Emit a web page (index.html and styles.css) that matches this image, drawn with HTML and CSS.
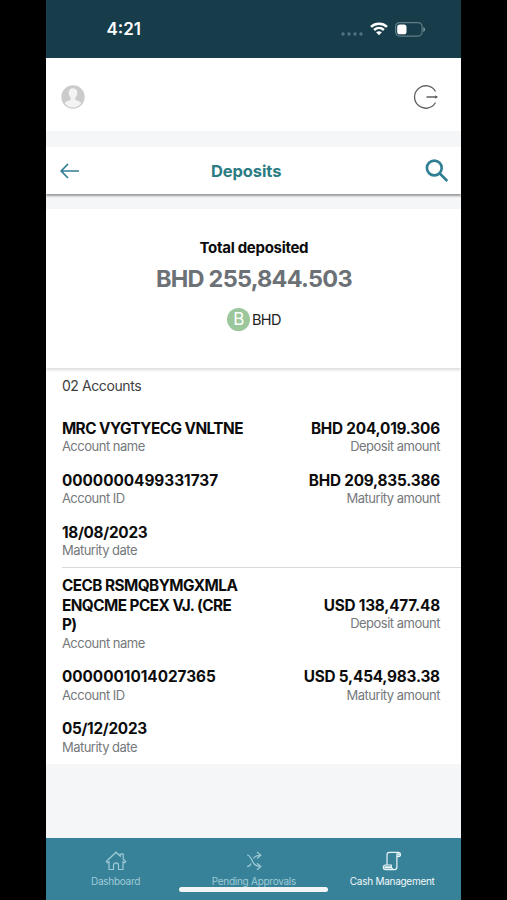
FILE: index.html
```html
<!DOCTYPE html>
<html lang="en">
<head>
    <meta charset="UTF-8">
    <title>Deposits</title>
    <link rel="stylesheet" href="styles.css">
</head>
<body>
<div class="phone">
    <div class="status">
        <span class="time">4:21</span>
        <div class="signals">
            <svg class="dots" width="22" height="4" viewBox="0 0 22 4"><circle cx="2" cy="2" r="1.7"/><circle cx="8" cy="2" r="1.7"/><circle cx="14" cy="2" r="1.7"/><circle cx="20" cy="2" r="1.7"/></svg>
            <svg class="wifi" width="18" height="14" viewBox="0 0 18 14"><path d="M1 4.8C5.5.6 12.5.6 17 4.8M4.1 8C7 5.4 11 5.4 13.9 8"/><path class="fill" d="M6.1 10.2C7.8 8.8 10.2 8.8 11.9 10.2L9 13.3Z"/></svg>
            <svg class="battery" width="31" height="15" viewBox="0 0 31 15"><rect class="shell" x=".6" y=".6" width="26.5" height="13.5" rx="4"/><rect x="2.2" y="2.5" width="9.3" height="9.8" rx="2.6"/><path class="tip" d="M28.3 5v5c1-.4 1.800-1.400 1.800-2.500S29.300 5.400 28.300 5Z"/></svg>
        </div>
    </div>

    <div class="header">
        <svg width="24" height="24" viewBox="0 0 24 24"><circle cx="12" cy="12" r="11.7" fill="#cbcbcb"/><path fill="#f3f3f3" d="M12 3.300c-2.700 0-4.300 1.900-4.300 4.500 0 2.100.8 4 2 5v2c-2.200.9-5 1.500-5.900 3.500C5.500 20.800 8.500 22.500 12 22.500s6.500-1.700 8.200-4.200c-.9-2-3.700-2.600-5.900-3.500v-2c1.200-1 2-2.900 2-5 0-2.600-1.600-4.500-4.300-4.500Z"/></svg>
        <svg width="26" height="24" viewBox="0 0 26 24"><path d="M22.500 6.500A11.200 11.200 0 1 0 22.500 17.500M13.500 12H23" fill="none" stroke="#606060" stroke-width="1.3"/><path d="M22.300 10.300 25 12l-2.700 1.700Z" fill="#505050"/></svg>
    </div>

    <div class="titlebar">
        <svg class="back" width="20" height="16" viewBox="0 0 20 16"><path d="M19 8H1.500M8 1 1.200 8 8 15"/></svg>
        <h1>Deposits</h1>
        <svg class="search" width="24" height="24" viewBox="0 0 24 24"><circle cx="9.300" cy="9" r="7.400"/><path d="M14.500 14.300 22.300 22"/></svg>
    </div>

    <div class="total">
        <h2>Total deposited</h2>
        <p class="sum">BHD 255,844.503</p>
        <p class="currency"><span class="coin">B</span><span>BHD</span></p>
    </div>

    <div class="accounts">
        <p class="count">02 Accounts</p>
        <div class="account">
            <div class="row">
                <div class="cell name"><b>MRC VYGTYECG VNLTNE</b><span>Account name</span></div>
                <div class="cell amount"><b>BHD 204,019.306</b><span>Deposit amount</span></div>
            </div>
            <div class="row">
                <div class="cell id"><b>0000000499331737</b><span>Account ID</span></div>
                <div class="cell amount"><b>BHD 209,835.386</b><span>Maturity amount</span></div>
            </div>
            <div class="row">
                <div class="cell date"><b>18/08/2023</b><span>Maturity date</span></div>
            </div>
        </div>
        <div class="account">
            <div class="row">
                <div class="cell name"><b>CECB RSMQBYMGXMLA<br>ENQCME PCEX VJ. (CRE<br>P)</b><span>Account name</span></div>
                <div class="cell amount"><b>USD 138,477.48</b><span>Deposit amount</span></div>
            </div>
            <div class="row">
                <div class="cell id"><b>0000001014027365</b><span>Account ID</span></div>
                <div class="cell amount"><b>USD 5,454,983.38</b><span>Maturity amount</span></div>
            </div>
            <div class="row">
                <div class="cell date"><b>05/12/2023</b><span>Maturity date</span></div>
            </div>
        </div>
    </div>

    <div class="tabs">
        <a class="tab">
            <svg width="22" height="20" viewBox="0 0 22 20"><path d="M1.300 10.500 11 1.200l4.200 4V3.200h3v5l2.500 2.300-1.200 1.200-1.500-.9V18.500h-4.500v-4.300c0-3-5-3-5 0v4.300H4v-7.700l-1.500.9Z"/></svg>
            <span>Dashboard</span>
        </a>
        <a class="tab">
            <svg width="18" height="20" viewBox="0 0 18 20"><path d="M2 4c5.500 0 4 11.500 13 11.500M2 15.500c2 0 3.200-1 4-3M8.500 7.500C9.500 5 11 4.300 15.500 4.300M12 1l3.800 3.300L12 7.600M12 12.200l3.800 3.300-3.800 3.300"/></svg>
            <span>Pending Approvals</span>
        </a>
        <a class="tab active">
            <svg width="20" height="20" viewBox="0 0 20 20"><path d="M5 14V4c0-1.800 1-2.700 2.500-2.700h8.700c1.500 0 2.300 1 2.300 2.300 0 1.200-.8 2-2 2h-1.300M16.200 1.300c-1 .2-1.300 1-1.300 2.300v12.500c0 1.800-1 2.600-2.300 2.600H3.700c-1.500 0-2.400-1-2.400-2.400s1-2.300 2.400-2.300h5.500c0 3 .8 4.400 3 4.700"/><path d="M3 15.800h6v1.200H3ZM16 3h1.200v1H16Z"/></svg>
            <span>Cash Management</span>
        </a>
        <i class="home"></i>
    </div>
</div>
</body>
</html>
```
FILE: styles.css
```css
*{
    margin: 0;
    padding: 0;
    box-sizing: border-box;
}
body{
    background: #000;
    font-family: Inter, "Liberation Sans", sans-serif;
}
svg{
    display: block;
    flex: none;
}
.phone{
    display: flex;
    flex-direction: column;
    width: 415px;
    height: 900px;
    margin-left: 46.4px;
    background: #f4f6f8;
    overflow: hidden;
}

/* status bar */
.status{
    display: flex;
    justify-content: space-between;
    align-items: center;
    height: 58px;
    padding: 0 35.6px 0 60px;
    background: #173d4b;
    color: #fff;
}
.time{
    font-size: 17px;
    font-weight: 600;
}
.signals{
    display: flex;
    align-items: center;
    gap: 7px;
}
.dots{
    margin-top: 9px;
    fill: #537280;
}
.wifi{
    fill: none;
    stroke: #fff;
    stroke-width: 2.5;
}
.wifi .fill{
    fill: #fff;
    stroke: none;
}
.battery{
    fill: #fff;
}
.battery .shell{
    fill: none;
    stroke: #617d88;
    stroke-width: 1.2;
}
.battery .tip{
    fill: #7d939c;
}

.header{
    display: flex;
    justify-content: space-between;
    align-items: center;
    height: 73px;
    padding: 4px 22.1px 0 14.6px;
    background: #fff;
}
.titlebar{
    display: flex;
    justify-content: space-between;
    align-items: center;
    height: 47px;
    margin-top: 16px;
    padding: 0 12.1px 0 13.6px;
    background: #fff;
    box-shadow: 0 2px 2px rgba(0,0,0,.38);
}
.titlebar h1{
    margin-right: 13px;
    font-size: 16.5px;
    font-weight: 700;
    letter-spacing: -.1px;
    color: #2b7c83;
}
.back, .search{
    fill: none;
    stroke: #2f7e94;
    stroke-width: 1.7;
}
.search{
    stroke-width: 2.6;
}

/* total */
.total{
    height: 159px;
    margin-top: 15px;
    padding-top: 29px;
    background: #fff;
    text-align: center;
    box-shadow: 0 2px 3px rgba(0,0,0,.14);
    position: relative;
}
.total h2{
    font-size: 15px;
    line-height: 20px;
    font-weight: 700;
    letter-spacing: -.3px;
    color: #0b0b0b;
}
.sum{
    margin-top: 6px;
    font-size: 23.5px;
    line-height: 30px;
    font-weight: 700;
    letter-spacing: -.75px;
    color: #6c7176;
}
.currency{
    display: flex;
    justify-content: center;
    align-items: center;
    gap: 2px;
    margin-top: 14px;
    font-size: 14.5px;
    letter-spacing: -.6px;
    color: #222;
}
.coin{
    width: 23px;
    height: 23px;
    border-radius: 50%;
    background: #9cc79c;
    color: #fff;
    font-size: 17px;
    line-height: 23px;
}

/* account list */
.accounts{
    height: 396px;
    background: #fff;
}
.count{
    height: 42px;
    padding: 8px 15.5px;
    font-size: 14px;
    line-height: 20px;
    letter-spacing: -.4px;
    color: #3e3e3e;
}
.account{
    display: flex;
    flex-direction: column;
    gap: 14.6px;
    margin-left: 15.5px;
    padding: 8px 21.5px 8px 0;
}
.account + .account{
    padding-top: 7px;
    border-top: 1px solid #dadada;
}
.row{
    display: flex;
    justify-content: space-between;
    align-items: center;
}
.cell b{
    display: block;
    margin-bottom: -.8px;
    padding-top: .8px;
    font-size: 15.3px;
    line-height: 19.4px;
    font-weight: 700;
    color: #0c0c0c;
}
.cell span{
    display: block;
    font-size: 13px;
    line-height: 18px;
    letter-spacing: -.5px;
    color: #75797c;
}
.name b{
    letter-spacing: -.52px;
}
.id b{
    letter-spacing: 0;
}
.date b{
    letter-spacing: -.27px;
}
.amount{
    text-align: right;
}
.amount b{
    letter-spacing: -.2px;
}

/* bottom tabs */
.tabs{
    display: grid;
    grid-template-columns: repeat(3, 1fr);
    height: 62px;
    margin-top: auto;
    padding-top: 13px;
    background: #378299;
    position: relative;
}
.tab{
    display: flex;
    flex-direction: column;
    align-items: center;
    gap: 3px;
    font-size: 10px;
    line-height: 14px;
    letter-spacing: -.27px;
    color: #9fcbd7;
}
.tab svg{
    fill: none;
    stroke: #9fcbd7;
    stroke-width: 1.2;
}
.active{
    color: #f1f8fa;
}
.active svg{
    stroke: #e8f4f7;
}
.home{
    position: absolute;
    left: 133px;
    bottom: 8px;
    width: 149px;
    height: 5px;
    border-radius: 3px;
    background: #f1f5f6;
}
```
